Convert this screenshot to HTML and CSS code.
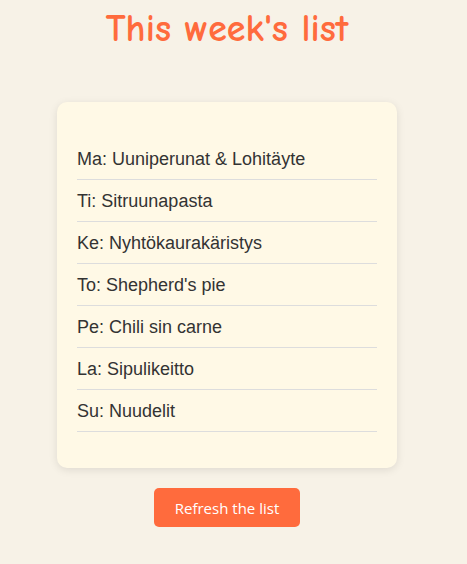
FILE: index.html
```html
<!DOCTYPE html>
<html>
<head>
<meta charset="utf-8">
<link rel="stylesheet" href="styles.css">
</head>
<body>
<h1 class="title">This week's list</h1>
<div class="card">
  <ul class="menu">
    <li>Ma: Uuniperunat &amp; Lohitäyte</li>
    <li>Ti: Sitruunapasta</li>
    <li>Ke: Nyhtökaurakäristys</li>
    <li>To: Shepherd's pie</li>
    <li>Pe: Chili sin carne</li>
    <li>La: Sipulikeitto</li>
    <li>Su: Nuudelit</li>
  </ul>
</div>
<div class="actions">
  <button class="refresh">Refresh the list</button>
</div>
</body>
</html>
```
FILE: styles.css
```css
html, body {
  margin: 0;
  padding: 0;
}
body {
  background: #f7f2e7;
  font-family: "Liberation Sans", Arial, sans-serif;
  color: #333;
  display: flex;
  flex-direction: column;
  align-items: center;
  padding: 8px 13px 0 0;
}
.title {
  font-family: "Comic Sans MS", "Comic Neue", "DejaVu Sans", sans-serif;
  font-weight: bold;
  font-size: 38px;
  color: #ff6b3d;
  margin: 0 0 52px;
  line-height: 42px;
}
.card {
  width: 340px;
  box-sizing: border-box;
  background: #fff9e6;
  border-radius: 10px;
  box-shadow: 0 2px 8px rgba(0,0,0,0.1);
  padding: 20px;
}
.menu {
  list-style: none;
  margin: 16px 0;
  padding: 0;
}
.menu li {
  font-size: 18px;
  line-height: 21px;
  padding: 11px 0 9px;
  border-bottom: 1px solid #ddd;
}
.actions {
  margin-top: 20px;
}
.refresh {
  background: #ff6b3d;
  color: #fff;
  border: none;
  border-radius: 5px;
  font-family: "Open Sans", "Noto Sans", sans-serif;
  font-size: 15px;
  width: 146px;
  height: 39px;
  padding: 0;
}
```
